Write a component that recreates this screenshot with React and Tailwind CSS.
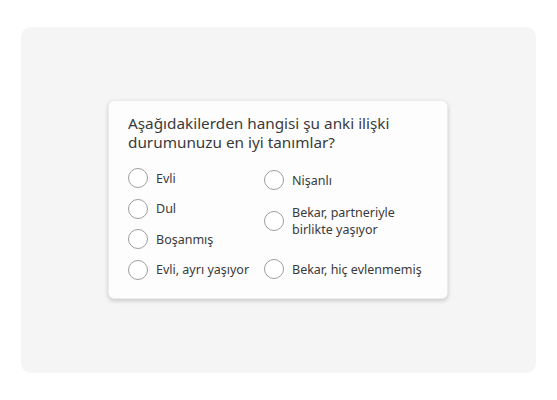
const leftOptions = ["Evli", "Dul", "Boşanmış", "Evli, ayrı yaşıyor"]

function Radio({ label }) {
  return (
    <div className="flex items-center gap-[8px]">
      <span className="w-5 h-5 shrink-0 rounded-full border border-[#9e9e9e] bg-white" />
      <span className="text-[12.5px] leading-[17px] text-[#3a3a3a]">{label}</span>
    </div>
  )
}

export default function App() {
  return (
    <div className="w-[557px] h-[400px] bg-white pt-[27px] pl-[21px]" style={{ fontFamily: "'Noto Sans', sans-serif" }}>
      <div className="w-[515px] h-[346px] bg-[#f5f5f5] rounded-[10px] pt-[73px] pl-[87px]">
        <div className="w-[340px] h-[199px] bg-[#fdfdfd] rounded-[6px] border border-[#ececec] shadow-[0_2px_4px_rgba(0,0,0,0.18)] pt-[13px] px-[19px]">
          {/* Question */}
          <p className="text-[15.3px] leading-[19px] text-[#3a3a3a]">
            Aşağıdakilerden hangisi şu anki ilişki
            <br />
            durumunuzu en iyi tanımlar?
          </p>

          {/* Options */}
          <div className="flex mt-[16px]">
            <div className="w-[136px] flex flex-col gap-[10.5px]">
              {leftOptions.map((o) => (
                <Radio key={o} label={o} />
              ))}
            </div>
            <div className="flex flex-col pt-[2px]">
              <Radio label="Nişanlı" />
              <div className="mt-[14px]">
                <Radio
                  label={
                    <>
                      Bekar, partneriyle
                      <br />
                      birlikte yaşıyor
                    </>
                  }
                />
              </div>
              <div className="mt-[21px]">
                <Radio label="Bekar, hiç evlenmemiş" />
              </div>
            </div>
          </div>
        </div>
      </div>
    </div>
  )
}
